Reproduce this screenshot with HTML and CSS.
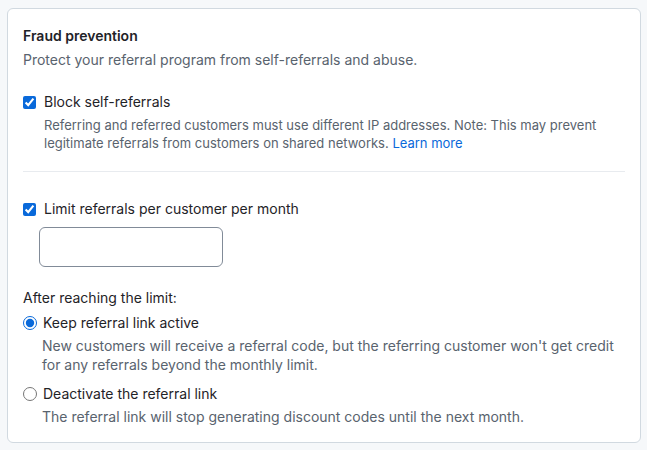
FILE: index.html
```html
<!DOCTYPE html>
<html>
<head>
<meta charset="utf-8">
<link rel="stylesheet" href="styles.css">
</head>
<body>
<div class="card">
  <h2 class="title">Fraud prevention</h2>
  <p class="subtitle">Protect your referral program from self-referrals and abuse.</p>

  <div class="option first">
    <label class="row"><input type="checkbox" checked><span>Block self-referrals</span></label>
    <p class="desc">Referring and referred customers must use different IP addresses. Note: This may prevent legitimate referrals from customers on shared networks. <a href="#">Learn more</a></p>
  </div>

  <hr class="divider">

  <div class="option">
    <label class="row"><input type="checkbox" checked><span>Limit referrals per customer per month</span></label>
    <input class="num" type="text">
  </div>

  <p class="after">After reaching the limit:</p>
  <div class="radio-opt">
    <label class="row"><input type="radio" name="lim" checked><span>Keep referral link active</span></label>
    <p class="desc">New customers will receive a referral code, but the referring customer won't get credit for any referrals beyond the monthly limit.</p>
  </div>
  <div class="radio-opt second">
    <label class="row"><input type="radio" name="lim"><span>Deactivate the referral link</span></label>
    <p class="desc">The referral link will stop generating discount codes until the next month.</p>
  </div>
</div>
</body>
</html>
```

FILE: styles.css
```css
html, body { margin: 0; padding: 0; }
body {
  background: #f6f8fa;
  font-family: Inter, "Noto Sans", sans-serif;
  color: #1f2328;
  padding: 8px 7px;
}
.card {
  width: 634px;
  box-sizing: border-box;
  background: #fff;
  border: 1px solid #d1d9e0;
  border-radius: 6px;
  padding: 17px 15px 16px 15px;
}
.title {
  margin: 0;
  font-size: 14px;
  font-weight: 600;
  line-height: 20px;
}
.subtitle {
  margin: 4px 0 0;
  font-size: 14px;
  line-height: 20px;
  color: #59636e;
}
.option.first { margin-top: 22px; }
.row {
  display: flex;
  align-items: center;
  gap: 8px;
  font-size: 14px;
  line-height: 20px;
}
.row input { margin: 0; width: 13px; height: 13px; accent-color: #0969da; }
.desc {
  margin: 4px 0 0 21px;
  font-size: 13px;
  line-height: 18px;
  color: #59636e;
}
.desc a { color: #0969da; text-decoration: none; }
.divider {
  border: 0;
  border-top: 1px solid #e8ebef;
  margin: 19px 0 0;
}
.divider + .option { margin-top: 27px; }
.num {
  display: block;
  margin: 8px 0 0 16px;
  width: 184px;
  height: 40px;
  box-sizing: border-box;
  border: 1px solid #818b98;
  border-radius: 6px;
}
.after {
  margin: 21px 0 0;
  font-size: 14px;
  line-height: 20px;
}
.radio-opt { margin-top: 5px; }
.radio-opt.second { margin-top: 10px; }
.radio-opt .desc { margin: 3px 0 0 19px; font-size: 14px; line-height: 19px; }
.radio-opt .row { gap: 6px; }
.radio-opt .row input { width: 14px; height: 14px; }
```
